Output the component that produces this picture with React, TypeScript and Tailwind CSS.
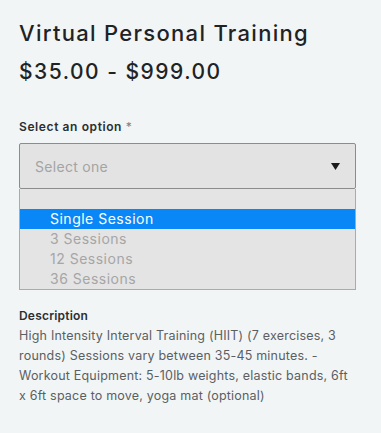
export default function App() {
  const options = ['3 Sessions', '12 Sessions', '36 Sessions'];
  return (
    <div className="w-[381px] h-[433px] bg-[#f2f5f5] px-[19px] pt-[18px] text-[#1e2326] font-['Inter',sans-serif]">
      <h1 className="text-[22px] leading-[30px] font-medium tracking-[1.3px]">Virtual Personal Training</h1>
      <p className="mt-[10px] text-[21px] leading-[28px] font-medium tracking-[1.5px]">$35.00 - $999.00</p>

      <label className="block mt-[33px] text-[12px] leading-[16px] font-semibold tracking-[0.6px] text-[#2a2f33]">
        Select an option <span className="text-[#7a7f83] font-normal">*</span>
      </label>
      <div className="mt-[8px] w-[337px]">
        <div className="h-[46px] flex items-center justify-between pl-[15px] pr-[15px] bg-[#e3e3e3] border border-[#8c8c8c] rounded-[2px]">
          <span className="text-[14px] tracking-[0.3px] text-[#a4a4a4]">Select one</span>
          <svg width="9" height="7" viewBox="0 0 9 7"><path d="M0 0h9L4.5 7z" fill="#1a1a1a" /></svg>
        </div>
        <div className="bg-[#e4e4e4] border border-[#a3acb6] border-t-0">
          <div className="h-[20px]" />
          <div className="h-[20px] bg-[#0a87f7] text-white text-[14px] leading-[20px] tracking-[0.5px] pl-[30px]">Single Session</div>
          {options.map(o => (
            <div key={o} className="h-[20px] text-[#a6a6a6] text-[14px] leading-[20px] tracking-[0.5px] pl-[30px]">{o}</div>
          ))}
        </div>
      </div>

      <p className="mt-[17px] text-[12px] leading-[18px] font-semibold tracking-[0.2px] text-[#2a2f33]">Description</p>
      <p className="mt-[1px] w-[334px] text-[12.5px] leading-[20px] tracking-[0.2px] text-[#5a5f63]">
        High Intensity Interval Training (HIIT) (7 exercises, 3 rounds) Sessions vary between 35-45 minutes. -
        Workout Equipment: 5-10lb weights, elastic bands, 6ft x 6ft space to move, yoga mat (optional)
      </p>
    </div>
  );
}
